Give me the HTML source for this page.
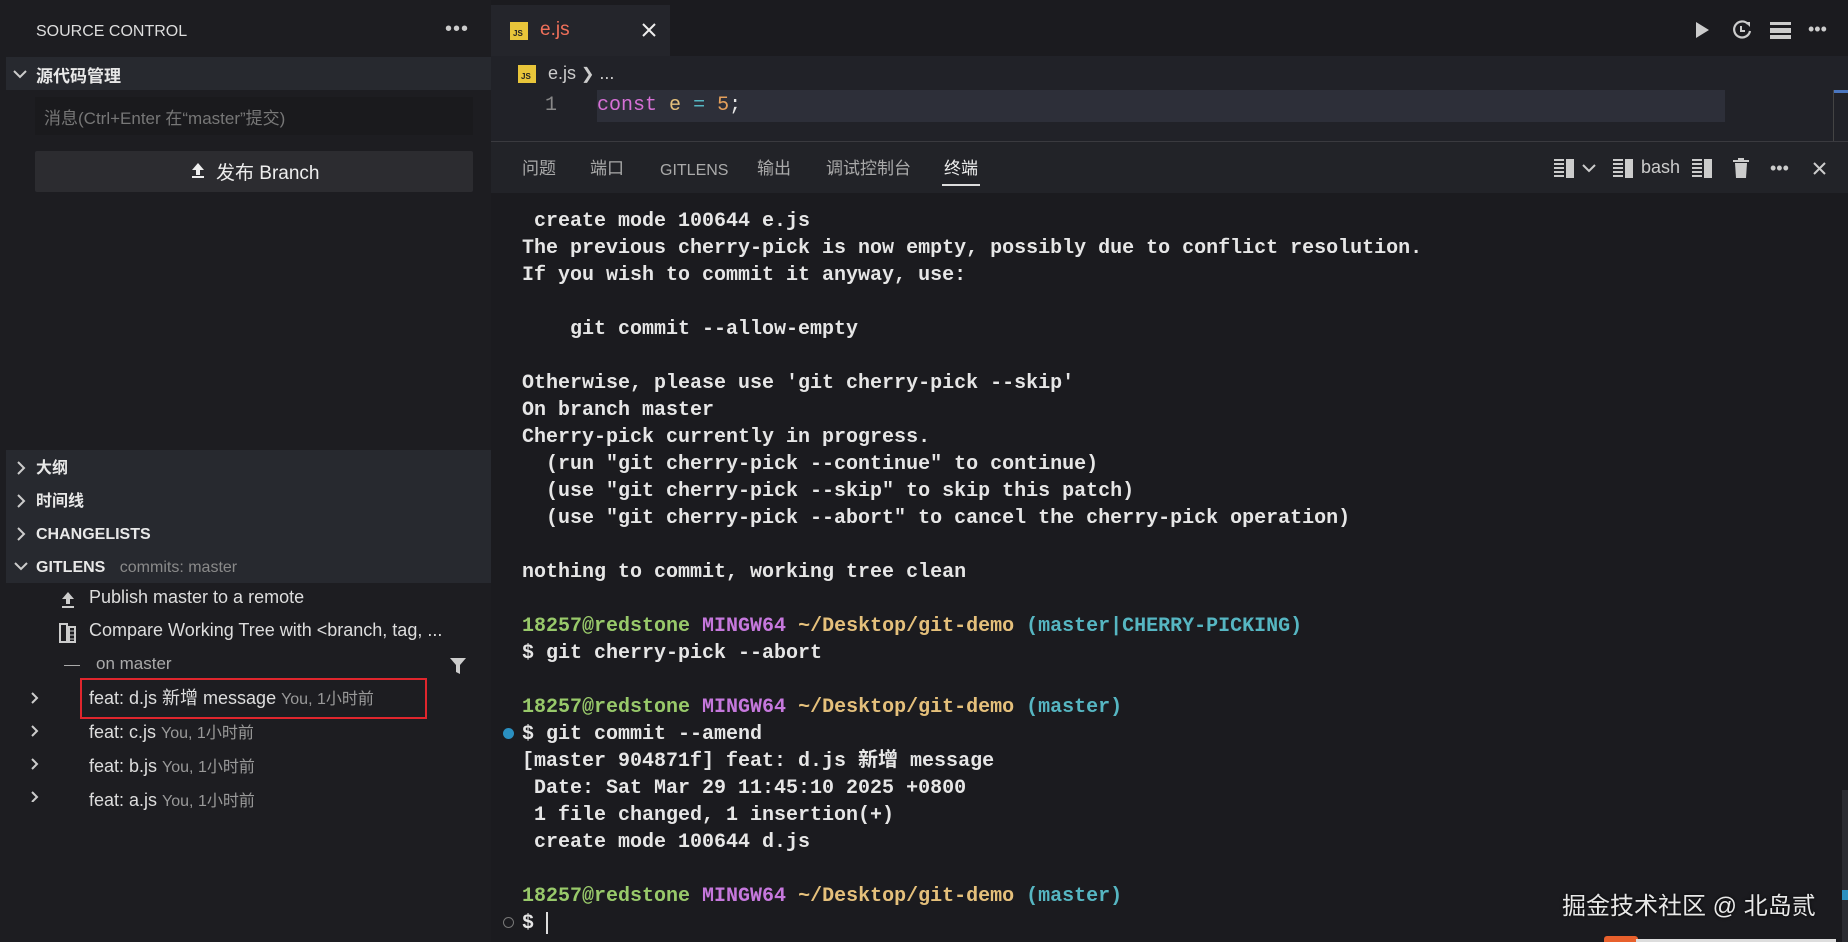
<!DOCTYPE html>
<html><head><meta charset="utf-8"><style>
*{margin:0;padding:0;box-sizing:border-box}
body{width:1848px;height:942px;background:#1b1b1f;font-family:"Liberation Sans","Noto Sans CJK SC",sans-serif;color:#cccccc;position:relative;overflow:hidden}
.a{position:absolute;white-space:nowrap}
.sb{left:0;top:0;width:491px;height:942px;background:#1d1d21}
.hdr{background:#27292f}
.term{font-family:"Liberation Mono","Noto Sans CJK SC",monospace;font-size:20px;line-height:27px;color:#e6e6e6;font-weight:bold;white-space:pre}
.g{color:#98c96a}.m{color:#c678dd}.y{color:#e5c07b}.c{color:#56b6c2}
.pt{position:absolute;top:158px;font-size:17px;color:#aaa;line-height:22px;font-family:"Liberation Sans","Noto Sans CJK SC",sans-serif}
</style></head><body>
<div class="a sb"></div>
<div class="a" style="left:36px;top:23px;font-size:16px;color:#ddd">SOURCE CONTROL</div>
<div class="a" style="left:445px;top:18px;font-size:20px;color:#ccc;letter-spacing:1px">•••</div>
<div class="a hdr" style="left:6px;top:57px;width:485px;height:33px"></div>
<svg class="a" style="left:12px;top:67px" width="16" height="14"><path d="M2 4l6 6 6-6" stroke="#ccc" stroke-width="2" fill="none"/></svg>
<div class="a" style="left:36px;top:62px;font-size:17px;font-weight:bold;color:#e8e8e8">源代码管理</div>
<div class="a" style="left:35px;top:97px;width:438px;height:38px;background:#1a1a1d"></div>
<div class="a" style="left:44px;top:104px;font-size:17px;color:#777">消息(Ctrl+Enter 在“master”提交)</div>
<div class="a" style="left:35px;top:151px;width:438px;height:41px;background:#2c2c30;border-radius:2px"></div>
<svg class="a" style="left:191px;top:162px" width="14" height="16"><path d="M7 1L1 8h4v5h4V8h4z M1 14h12v2H1z" fill="#eee"/></svg>
<div class="a" style="left:216px;top:158px;font-size:19px;color:#eee">发布 Branch</div>

<div class="a hdr" style="left:6px;top:450px;width:485px;height:133px"></div>
<div class="a" style="left:36px;top:452px;font-size:16px;font-weight:bold;color:#e8e8e8;line-height:33px">大纲<br>时间线<br>CHANGELISTS<br>GITLENS <span style="font-weight:normal;color:#8a8a8a;font-size:16px;margin-left:10px">commits: master</span></div>
<svg class="a" style="left:14px;top:461px" width="14" height="120"><path d="M4 1l6 6-6 6M4 34l6 6-6 6M4 67l6 6-6 6" stroke="#ccc" stroke-width="2" fill="none"/><path d="M1 102l6 6 6-6" stroke="#ccc" stroke-width="2" fill="none"/></svg>
<svg class="a" style="left:60px;top:591px" width="16" height="18"><path d="M8 1L2 8h4v5h4V8h4z M2 15h12v2H2z" fill="#ccc"/></svg>
<svg class="a" style="left:59px;top:623px" width="18" height="20"><rect x="1" y="1" width="7" height="18" fill="none" stroke="#ccc" stroke-width="2"/><rect x="10" y="4" width="6" height="15" fill="none" stroke="#ccc" stroke-width="2"/><path d="M11 8h4M11 12h4M11 16h4" stroke="#ccc"/></svg>
<div class="a" style="left:89px;top:587px;font-size:18px;color:#ddd">Publish master to a remote</div>
<div class="a" style="left:89px;top:620px;font-size:18px;color:#ddd">Compare Working Tree with &lt;branch, tag, ...</div>
<div class="a" style="left:64px;top:665px;width:16px;height:1px;background:#aaa"></div>
<div class="a" style="left:96px;top:654px;font-size:17px;color:#aaa">on master</div>
<svg class="a" style="left:449px;top:656px" width="18" height="20"><path d="M1 2h16l-6 7v9l-4-2V9z" fill="#ccc"/></svg>
<div class="a" style="left:80px;top:678px;width:347px;height:41px;border:2px solid #e0262d"></div>
<svg class="a" style="left:30px;top:692px" width="10" height="110"><path d="M2 1l5 5-5 5M2 34l5 5-5 5M2 67l5 5-5 5M2 100l5 5-5 5" stroke="#ccc" stroke-width="2" fill="none"/></svg>
<div class="a" style="left:89px;top:682px;font-size:18px;color:#ddd;line-height:33px">feat: d.js 新增 message <span style="color:#999;font-size:16px">You, 1小时前</span><br>feat: c.js <span style="color:#999;font-size:16px">You, 1小时前</span><br>feat: b.js <span style="color:#999;font-size:16px">You, 1小时前</span><br>feat: a.js <span style="color:#999;font-size:16px">You, 1小时前</span></div>

<div class="a" style="left:491px;top:5px;width:179px;height:51px;background:#24252b"></div>
<div class="a" style="left:510px;top:22px;width:18px;height:18px;background:#e8c53a;color:#222;font-size:8px;font-weight:bold;padding:8px 0 0 3px;line-height:8px">JS</div>
<div class="a" style="left:540px;top:19px;font-size:19px;color:#f0705a">e.js</div>
<svg class="a" style="left:642px;top:23px" width="14" height="14"><path d="M1 1l12 12M13 1L1 13" stroke="#eee" stroke-width="2"/></svg>
<svg class="a" style="left:1694px;top:21px" width="16" height="18"><path d="M2 1l13 8-13 8z" fill="#ccc"/></svg>
<svg class="a" style="left:1731px;top:20px" width="21" height="21"><path d="M17 4A8 8 0 1 0 19 11" stroke="#ccc" stroke-width="2.2" fill="none"/><path d="M14 2l5 0 0 5z" fill="#ccc"/><path d="M10 6v5h4" stroke="#ccc" stroke-width="2" fill="none"/></svg>
<svg class="a" style="left:1770px;top:22px" width="21" height="17"><rect x="0" y="0" width="21" height="3" fill="#ccc"/><rect x="0" y="6" width="21" height="5" fill="#ccc"/><rect x="0" y="13" width="21" height="4" fill="#ccc"/></svg>
<div class="a" style="left:1808px;top:19px;font-size:18px;color:#ccc">•••</div>

<div class="a" style="left:491px;top:56px;width:1357px;height:85px;background:#212228"></div>
<div class="a" style="left:518px;top:65px;width:18px;height:18px;background:#e8c53a;color:#222;font-size:8px;font-weight:bold;padding:8px 0 0 3px;line-height:8px">JS</div>
<div class="a" style="left:548px;top:63px;font-size:18px;color:#ccc">e.js <span style="font-size:16px">❯</span> ...</div>
<div class="a" style="left:597px;top:90px;width:1128px;height:32px;background:#2d2f39"></div>
<div class="a term" style="left:545px;top:92px;font-weight:normal;color:#888">1</div>
<div class="a term" style="left:597px;top:92px;font-weight:normal"><span style="color:#d670d6">const</span> <span class="y">e</span> <span class="c">=</span> <span style="color:#e5a05b">5</span>;</div>
<div class="a" style="left:1834px;top:90px;width:14px;height:3px;background:#4a76c0"></div>
<div class="a" style="left:1833px;top:90px;width:1px;height:51px;background:#444"></div>
<div class="a" style="left:491px;top:141px;width:1357px;height:1px;background:#3a3a3f"></div>

<div class="a" style="left:491px;top:142px;width:1357px;height:51px;background:#222328"></div>
<div class="pt" style="left:522px">问题</div>
<div class="pt" style="left:590px">端口</div>
<div class="pt" style="left:660px;top:160px;font-size:16px">GITLENS</div>
<div class="pt" style="left:757px">输出</div>
<div class="pt" style="left:826px">调试控制台</div>
<div class="pt" style="left:944px;color:#eee">终端</div>
<div class="a" style="left:942px;top:184px;width:38px;height:2px;background:#ddd"></div>
<svg class="a" style="left:1554px;top:159px" width="22" height="19"><path d="M0 1h10M0 5h10M0 9h10M0 13h10M0 17h10" stroke="#ccc" stroke-width="2"/><rect x="12" y="0" width="8" height="19" fill="#ccc"/></svg>
<svg class="a" style="left:1582px;top:163px" width="14" height="10"><path d="M1 2l6 6 6-6" stroke="#ccc" stroke-width="2" fill="none"/></svg>
<svg class="a" style="left:1613px;top:159px" width="22" height="19"><path d="M0 1h10M0 5h10M0 9h10M0 13h10M0 17h10" stroke="#ccc" stroke-width="2"/><rect x="12" y="0" width="8" height="19" fill="#ccc"/></svg>
<div class="a" style="left:1641px;top:157px;font-size:18px;color:#ccc">bash</div>
<svg class="a" style="left:1692px;top:159px" width="22" height="19"><path d="M0 1h10M0 5h10M0 9h10M0 13h10M0 17h10" stroke="#ccc" stroke-width="2"/><rect x="12" y="0" width="8" height="19" fill="#ccc"/></svg>
<svg class="a" style="left:1733px;top:158px" width="16" height="20"><rect x="0" y="2" width="16" height="2" fill="#ccc"/><rect x="5" y="0" width="6" height="2" fill="#ccc"/><path d="M2 5h12l-1 15H3z" fill="#ccc"/></svg>
<div class="a" style="left:1770px;top:158px;font-size:18px;color:#ccc">•••</div>
<svg class="a" style="left:1813px;top:162px" width="13" height="13"><path d="M1 1l11 11M12 1L1 12" stroke="#ccc" stroke-width="2"/></svg>

<div class="a term" style="left:522px;top:208px"> create mode 100644 e.js
The previous cherry-pick is now empty, possibly due to conflict resolution.
If you wish to commit it anyway, use:

    git commit --allow-empty

Otherwise, please use 'git cherry-pick --skip'
On branch master
Cherry-pick currently in progress.
  (run "git cherry-pick --continue" to continue)
  (use "git cherry-pick --skip" to skip this patch)
  (use "git cherry-pick --abort" to cancel the cherry-pick operation)

nothing to commit, working tree clean

<span class="g">18257@redstone</span> <span class="m">MINGW64</span> <span class="y">~/Desktop/git-demo</span> <span class="c">(master|CHERRY-PICKING)</span>
$ git cherry-pick --abort

<span class="g">18257@redstone</span> <span class="m">MINGW64</span> <span class="y">~/Desktop/git-demo</span> <span class="c">(master)</span>
$ git commit --amend
[master 904871f] feat: d.js 新增 message
 Date: Sat Mar 29 11:45:10 2025 +0800
 1 file changed, 1 insertion(+)
 create mode 100644 d.js

<span class="g">18257@redstone</span> <span class="m">MINGW64</span> <span class="y">~/Desktop/git-demo</span> <span class="c">(master)</span>
$ <span style="display:inline-block;width:2px;height:22px;background:#ddd;vertical-align:middle"></span></div>
<div class="a" style="left:503px;top:728px;width:11px;height:11px;border-radius:50%;background:#2a8fc0"></div>
<div class="a" style="left:503px;top:917px;width:11px;height:11px;border-radius:50%;border:1.5px solid #777"></div>
<div class="a" style="left:1842px;top:790px;width:6px;height:152px;background:#2b2c31"></div>
<div class="a" style="left:1842px;top:890px;width:6px;height:10px;background:#2a8fc0"></div>
<div class="a" style="left:1562px;top:886px;font-size:24px;color:#e8e8e8;text-shadow:0 0 3px #000">掘金技术社区 @ 北岛贰</div>
<div class="a" style="left:1604px;top:936px;width:34px;height:6px;background:#e8602c;border-radius:3px 3px 0 0"></div>
<div class="a" style="left:1636px;top:939px;width:200px;height:3px;background:#ddd"></div>
</body></html>
